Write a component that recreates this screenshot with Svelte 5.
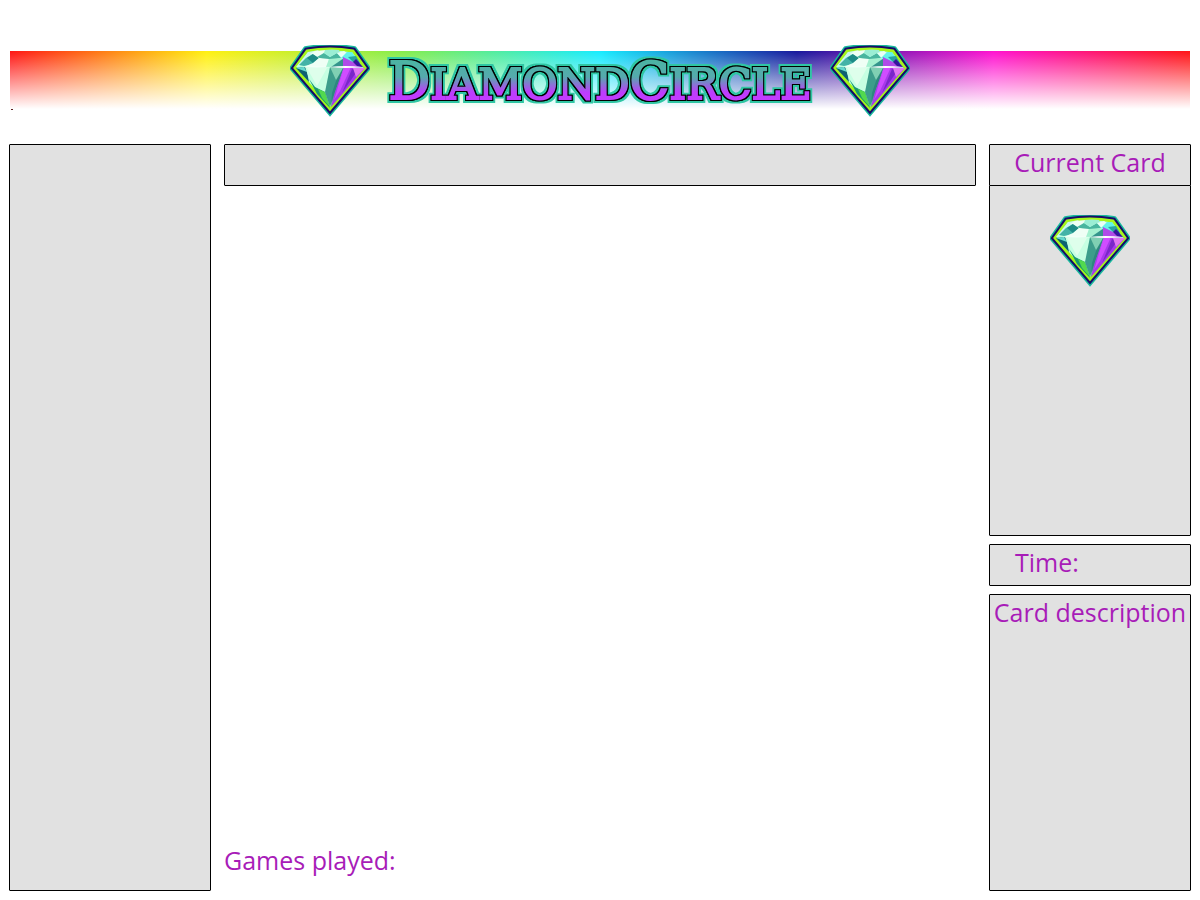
<script>
  const title = [
    { big: 'D', rest: 'IAMOND' },
    { big: 'C', rest: 'IRCLE' }
  ];
</script>

{#snippet diamond()}
  <svg class="diamond" viewBox="0 0 80 72" aria-hidden="true">
    <path d="M17 6Q40 2 63 6L75 23L40 64L5 23Z" fill="#0bb79b" stroke="#16b99c" stroke-width="10" />
    <path d="M17 6Q40 2 63 6L75 23L40 64L5 23Z" fill="#160c68" stroke="#160c68" stroke-width="7" />
    <path d="M17 6Q40 2 63 6L75 23L40 64L5 23Z" fill="#b8ffe2" stroke="#a5f51b" stroke-width="3" />
    <path d="M18 7L29 5L20 13L8 22L6 22Z" fill="#c9f7ef" />
    <path d="M16 13L23 9L29 13L23 19L14 21L9 20Z" fill="#43b3a7" />
    <path d="M17 13L23 9L29 13L23 18Z" fill="#1d8b86" />
    <path d="M20 9L25 6L36 5L29 13L23 9Z" fill="#effff5" />
    <path d="M27 12L34 8L40 12L47 8L51 13L42 15L32 14Z" fill="#48b59f" />
    <path d="M35 5Q42 4 49 5L51 10L47 8L40 12L34 8Z" fill="#9aeed4" />
    <path d="M29 13L39 14L37 22L14 22L23 18Z" fill="#effff5" />
    <path d="M39 14L50 13L53 15L41 22L36 22Z" fill="#a5f1d0" />
    <path d="M47 8L54 6L58 9L53 14Z" fill="#e9fff5" />
    <path d="M51 13L57 7L62 7L70 18L62 17Z" fill="#62f3e8" />
    <path d="M58 12L66 11L70 18L63 17Z" fill="#27a5a0" />
    <path d="M41 22L54 13L56 22Z" fill="#35958c" />
    <path d="M53 12L63 17L73 22L53 22Z" fill="#b04be8" />
    <path d="M66 14L73 22L67 21L63 17Z" fill="#34149d" />
    <path d="M6 23L16 22L19 37Z" fill="#0d6170" />
    <path d="M6 23L14 22L17 27Z" fill="#66d9cd" />
    <path d="M15 22L40 22L35 47L25 42L19 33Z" fill="#c6ffe2" />
    <path d="M17 23L37 23L27 41Z" fill="#effff2" opacity=".6" />
    <path d="M19 34L25 42L35 47L40 63L27 49Z" fill="#17986d" />
    <path d="M28 44L35 47L40 62L32 53Z" fill="#52d94d" />
    <path d="M40 22L35 47L40 62L45 47L54 22Z" fill="#3c9d8b" />
    <path d="M40 22L46 35L53 23Z" fill="#7fd0b3" />
    <path d="M46 36L54 22L41 62L42 48Z" fill="#267e7b" opacity=".7" />
    <path d="M54 22L75 23L41 62L45 47Z" fill="#a839ea" />
    <path d="M54 22L61 22L50 46L44 55Z" fill="#cf4dff" />
    <path d="M62 24L68 25L52 48Z" fill="#7927c9" />
    <path d="M63 23L75 23L66 32Z" fill="#df76f0" />
    <path d="M39 22Q56 20 71 22Q56 24 39 22Z" fill="#fff" />
    <path d="M12 22Q27 21 42 22Q27 24 12 22Z" fill="#fff" opacity=".6" />
  </svg>
{/snippet}

<div class="page">
  <header>
    {@render diamond()}
    <h1>
      <svg class="wordmark" viewBox="0 0 440 60" role="img" aria-label="DiamondCircle">
        <defs>
          <linearGradient id="ink" gradientUnits="userSpaceOnUse" x1="0" y1="10" x2="0" y2="50">
            <stop offset="0" stop-color="#4cb3a3" />
            <stop offset=".4" stop-color="#55aaad" />
            <stop offset=".78" stop-color="#bd3dfd" />
            <stop offset="1" stop-color="#c33bff" />
          </linearGradient>
          <filter id="outline" filterUnits="userSpaceOnUse" x="0" y="0" width="440" height="60" color-interpolation-filters="sRGB">
            <feMorphology in="SourceAlpha" operator="dilate" radius="3" result="wide" />
            <feGaussianBlur in="wide" stdDeviation=".5" result="soft" />
            <feFlood flood-color="#2fc6a3" />
            <feComposite in2="soft" operator="in" result="halo" />
            <feMorphology in="SourceAlpha" operator="dilate" radius="1" result="near" />
            <feFlood flood-color="#000" />
            <feComposite in2="near" operator="in" result="edge" />
            <feMerge>
              <feMergeNode in="halo" />
              <feMergeNode in="edge" />
              <feMergeNode in="edge" />
              <feMergeNode in="SourceGraphic" />
            </feMerge>
          </filter>
        </defs>
        <text x="220" y="48" text-anchor="middle" fill="url(#ink)" stroke="url(#ink)" filter="url(#outline)">{#each title as word}<tspan class="big">{word.big}</tspan><tspan>{word.rest}</tspan>{/each}</text>
      </svg>
    </h1>
    {@render diamond()}
  </header>

  <main>
    <aside class="panel" aria-label="Players"></aside>

    <section class="board">
      <div class="panel bar"></div>
      <p>Games played:</p>
    </section>

    <div class="side">
      <section class="current">
        <h2 class="panel bar">Current Card</h2>
        <div class="panel card">{@render diamond()}</div>
      </section>
      <p class="panel bar time">Time:</p>
      <section class="panel description">
        <h2>Card description</h2>
      </section>
    </div>
  </main>
</div>

<style>
  :global(body) {
    margin: 0;
    background: #fff;
  }

  .page {
    display: flex;
    flex-direction: column;
    box-sizing: border-box;
    min-height: 100vh;
    padding: 0 9px 9px;
    color: #a81cb8;
    font: 25px/34px "Open Sans", "Noto Sans", sans-serif;
  }

  h1,
  h2,
  p {
    margin: 0;
    font: inherit;
  }

  header {
    display: flex;
    justify-content: center;
    box-sizing: border-box;
    height: 144px;
    padding-top: 45px;
    gap: 10px;
    background:
      linear-gradient(#5c2020, #5c2020) 2px 109px / 2px 1px no-repeat,
      linear-gradient(#fff0, #fff) 1px 51px / calc(100% - 2px) 58px no-repeat,
      linear-gradient(90deg, #ff1515, #fff00f 16.67%, #84ed4b 33.33%, #15ecff 50%, #17179c 66.67%, #ff12d0 83.33%, #ff1515) 1px 51px / calc(100% - 2px) 58px no-repeat;
  }

  .diamond {
    display: block;
    flex: none;
    width: 80px;
    height: 72px;
  }

  .wordmark {
    display: block;
    width: 440px;
    height: 60px;
    margin-top: 6px;
  }

  .wordmark text {
    font-family: "DejaVu Serif", serif;
    font-size: 43px;
    stroke-width: 2px;
  }

  .wordmark .big {
    font-size: 52px;
  }

  main {
    display: grid;
    flex: 1;
    grid-template-columns: 202px minmax(0, 1fr) 202px;
    gap: 13px;
  }

  .panel {
    box-sizing: border-box;
    border: 1px solid #000;
    border-radius: 1px;
    background: #e1e1e1;
  }

  .bar {
    height: 42px;
  }

  .board {
    display: flex;
    flex-direction: column;
    justify-content: space-between;
  }

  .board p {
    padding-bottom: 14px;
  }

  .side {
    display: flex;
    flex-direction: column;
    gap: 8px;
  }

  h2 {
    text-align: center;
    white-space: nowrap;
  }

  .card {
    display: flex;
    justify-content: center;
    height: 351px;
    margin-top: -1px;
    padding-top: 29px;
  }

  .time {
    padding-left: 25px;
  }

  .description {
    flex: 1;
  }
</style>
